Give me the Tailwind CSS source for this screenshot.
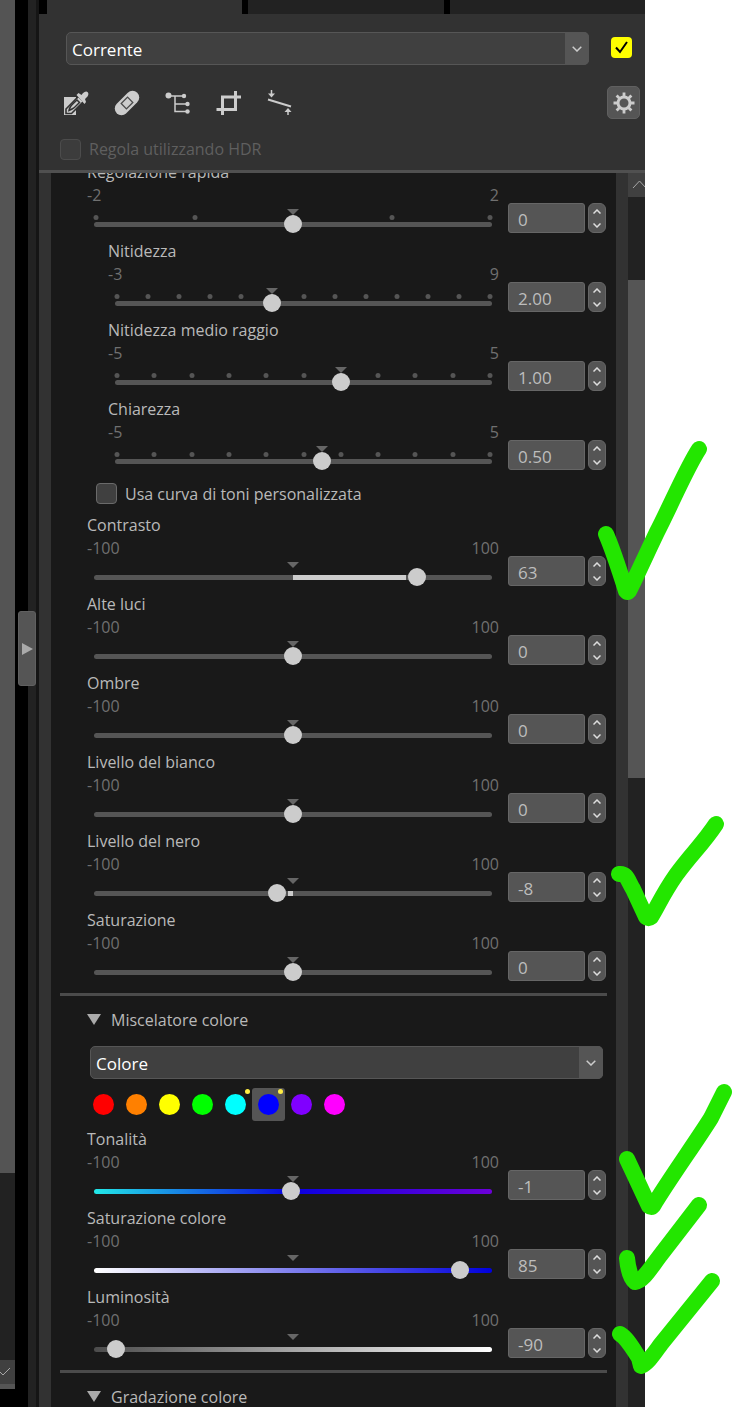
<!doctype html>
<html lang="it">
  <head>
    <meta charset="utf-8" />
    <meta name="viewport" content="width=device-width, initial-scale=1" />
    <title>Regolazioni</title>
    <script src="https://cdn.jsdelivr.net/npm/@tailwindcss/browser@4"></script>
  </head>

  <body class="relative flex h-screen overflow-hidden bg-white font-['Open_Sans','Noto_Sans',sans-serif] text-base text-[#b9b9b9]">
    <!-- Left window edge -->
    <div class="flex w-[15px] shrink-0 flex-col bg-black">
      <div class="h-[1173px] shrink-0 bg-[#545454]"></div>
      <div class="h-[187px] shrink-0 bg-[#222222]"></div>
      <button type="button" aria-label="Scorri in basso" class="h-[29px] shrink-0 border-b-[5px] border-[#555555] bg-[#404040]">
        <svg class="h-6 w-[15px]" viewBox="0 0 15 24" fill="none" stroke="#a8a8a8"><path d="M-3 9 3 15l7-7" /></svg>
      </button>
    </div>
    <div class="relative flex w-6 shrink-0 bg-black pl-[13px]">
      <div class="w-2 bg-[#222222]"></div>
      <div class="w-[3px] bg-[#151515]"></div>
      <button type="button" aria-label="Nascondi pannello" class="absolute top-[611px] left-[3px] flex h-[75px] w-[18px] items-center justify-center rounded-[3px] border border-[#606060] bg-[#555555]">
        <svg class="h-3 w-3 shrink-0" viewBox="0 0 12 12" fill="#aaaaaa"><path d="M1 0v12l11-6z" /></svg>
      </button>
    </div>

    <!-- Panel -->
    <main class="flex min-w-0 flex-1 flex-col bg-[#323232]">
      <nav class="flex h-[14px] shrink-0 gap-[6px] overflow-hidden bg-black pl-2">
        <a href="#regolazioni" class="-mt-[18px] flex-1 bg-[#323232] text-center leading-4 text-[#c8c8c8]">Regolazioni</a>
        <a href="#colore" class="-mt-[18px] flex-1 bg-[#222222]" aria-label="Colore"></a>
        <a href="#proprieta" class="-mt-[18px] flex-1 bg-[#222222] text-center leading-4 text-[#a0a0a0]">Proprietà</a>
      </nav>

      <header class="shrink-0 pt-[18px] pr-[5px] pb-[10px] pl-[21px]">
        <div class="flex items-center pl-[6px]">
          <div class="relative flex-1">
            <select aria-label="Versione" class="block h-[33px] w-full appearance-none rounded-[5px] border border-[#565656] bg-[#404040] pt-[2px] pl-[5px] text-[17px] text-white">
              <option>Corrente</option>
            </select>
            <span class="pointer-events-none absolute inset-y-0 right-0 flex w-6 items-center justify-center rounded-r-[5px] bg-[#555555]">
              <svg class="h-[6px] w-[10px]" viewBox="0 0 10 6" fill="none" stroke="#cccccc" stroke-width="1.5"><path d="m.7.7 4.3 4.3 4.3-4.3" /></svg>
            </span>
          </div>
          <div class="relative mr-2 mb-[2px] ml-[22px] size-[21px]">
            <input type="checkbox" checked aria-label="Attiva regolazioni" class="block size-[21px] appearance-none rounded-[4px] bg-[#ffff00]" />
            <svg class="pointer-events-none absolute inset-0" viewBox="0 0 21 21" fill="none" stroke="#000000" stroke-width="2"><path d="m5 10.5 4 4.500 7-10" /></svg>
          </div>
        </div>

        <div class="mt-[21px] flex items-center text-[#cccccc]">
          <div class="flex flex-1 gap-[25px] pl-[3px]">
            <button type="button" aria-label="Punto grigio" class="size-[26px]">
              <svg viewBox="0 0 26 26">
                <path d="M1 7h12v18H1z" fill="currentColor" />
                <path d="M3 23.500V19L15.500 6.500l5 5L8.500 23.500z" fill="currentColor" stroke="#323232" stroke-width="1.600" />
                <path d="M6 20.500c1-4 1.500-4.500 8-10.500l2.500 2.500c-6 6-6.500 6.500-10.500 8z" fill="none" stroke="#323232" stroke-width="1.500" />
                <path d="m13.500 5 2-2 3 2c1.500-2 3-3.500 5-3.500 2.200.5 2.500 3 1 5l-2.500 2.500 1 3-1.500 2z" fill="currentColor" />
              </svg>
            </button>
            <button type="button" aria-label="Ritocco" class="size-[26px]">
              <svg viewBox="0 0 26 26">
                <g transform="rotate(-45 13 13)">
                  <rect x="-1.500" y="6.300" width="29" height="13.400" rx="6.700" fill="currentColor" />
                  <rect x="8.500" y="9.300" width="9" height="7.400" fill="none" stroke="#4a4a4a" stroke-width="1.300" />
                </g>
              </svg>
            </button>
            <button type="button" aria-label="Punti di controllo" class="size-[26px]">
              <svg viewBox="0 0 26 26" fill="none" stroke="currentColor" stroke-width="1.500">
                <path d="M3 6h16M10 6v15.500h12M10 14h12" />
                <g fill="currentColor" stroke="none">
                  <circle cx="3.500" cy="5.500" r="3" /><circle cx="19" cy="6" r="2.200" /><circle cx="22.500" cy="14" r="2.200" /><circle cx="22.500" cy="21.500" r="2.200" />
                </g>
              </svg>
            </button>
            <button type="button" aria-label="Ritaglia" class="size-[26px]">
              <svg viewBox="0 0 26 26" fill="none" stroke="currentColor" stroke-width="3"><path d="M6.500 25V7H25M.500 19.500H19.500V1" /></svg>
            </button>
            <button type="button" aria-label="Raddrizza" class="size-[26px]">
              <svg viewBox="0 0 26 26" fill="none" stroke="currentColor">
                <path d="M1 9.500 24 16.500" stroke-width="2" />
                <path d="M4.500 0v5M21 25v-5" stroke-width="1.500" />
                <path d="M1 3.500h7L4.500 7.500zM17.500 22h7L21 18z" fill="currentColor" stroke="none" />
              </svg>
            </button>
          </div>
          <button type="button" aria-label="Impostazioni" class="flex size-[33px] items-center justify-center rounded-[5px] border border-[#606060] bg-[#555555]">
            <svg class="size-[22px]" viewBox="-11 -11 22 22" fill="none" stroke="currentColor">
              <circle r="6" stroke-width="3" />
              <path d="M0-10.500V-6M0 10.500V6M-10.500 0H-6M10.500 0H6M-7.400-7.400l3 3M7.400 7.400l-3-3M-7.400 7.400l3-3M7.400-7.400l-3 3" stroke-width="2.800" />
            </svg>
          </button>
        </div>

        <div class="mt-[19px] flex items-center gap-2">
          <input id="hdr" type="checkbox" disabled class="size-[21px] appearance-none rounded-[4px] border border-[#4c4c4c] bg-[#3c3c3c]" />
          <label for="hdr" class="leading-[22px] text-[#5f5f5f]">Regola utilizzando HDR</label>
        </div>
      </header>

      <div class="flex min-h-0 flex-1 border-t-[3px] border-[#505050]">
        <div class="mx-3 min-w-0 flex-1 overflow-hidden bg-[#191919]">
          <div class="-mt-[13px] pr-[10px] pl-9">
            <div id="quick"></div>
            <div class="flex h-[37px] items-center gap-2 pb-[2px] pl-[9px]">
              <input id="tone" type="checkbox" class="size-[21px] appearance-none rounded-[4px] border border-[#6a6a6a] bg-[#404040]" />
              <label for="tone">Usa curva di toni personalizzata</label>
            </div>
            <div id="light"></div>
          </div>

          <hr class="mt-[6px] mr-[9px] ml-[9px] border-t-[3px] border-[#4b4b4b]" />
          <section class="pr-[10px] pl-9">
            <h2 class="flex h-[50px] items-center gap-[10px] pb-[2px]">
              <svg class="mb-[2px] h-[11px] w-[14px]" viewBox="0 0 14 11" fill="#aaaaaa"><path d="M0 0h14L7 11z" /></svg>
              Miscelatore colore
            </h2>
            <div class="relative mr-[3px] ml-[3px]">
              <select aria-label="Modalità miscelatore" class="block h-[33px] w-full appearance-none rounded-[5px] border border-[#565656] bg-[#404040] pt-[2px] pl-[5px] text-[17px] text-white">
                <option>Colore</option>
              </select>
              <span class="pointer-events-none absolute inset-y-0 right-0 flex w-6 items-center justify-center rounded-r-[5px] bg-[#555555]">
                <svg class="h-[6px] w-[10px]" viewBox="0 0 10 6" fill="none" stroke="#cccccc" stroke-width="1.5"><path d="m.7.7 4.3 4.3 4.3-4.3" /></svg>
              </span>
            </div>
            <div id="swatches" class="mt-[9px] mb-[6px] flex"></div>
            <div id="mixer"></div>
          </section>

          <hr class="mt-[6px] mr-[9px] ml-[9px] border-t-[3px] border-[#4b4b4b]" />
          <h2 class="flex h-[50px] items-center gap-[10px] pb-[2px] pl-9">
            <svg class="mb-[2px] h-[11px] w-[14px]" viewBox="0 0 14 11" fill="#aaaaaa"><path d="M0 0h14L7 11z" /></svg>
            Gradazione colore
          </h2>
        </div>

        <!-- Scrollbar -->
        <div class="w-[17px] shrink-0 overflow-hidden bg-[#222222]">
          <button type="button" aria-label="Scorri in alto" class="mb-[83px] block h-6 w-full bg-[#404040]">
            <svg class="h-6 w-[17px]" viewBox="0 0 17 24" fill="none" stroke="#a8a8a8"><path d="m5 15 6.500-7 6.500 7" /></svg>
          </button>
          <div class="h-[498px] bg-[#555555]"></div>
        </div>
      </div>
    </main>
    <div class="w-[88px] shrink-0"></div>

    <!-- Hand-drawn ticks -->
    <svg class="pointer-events-none absolute top-0 right-0 h-[1407px] w-[140px]" viewBox="593 0 140 1407" fill="none" stroke="#23e600" stroke-width="16" stroke-linecap="round" stroke-linejoin="round">
      <path d="M606 534c4 9 14 38 20 57q1.500 2 3 0c8-16 17-36 28-59 14-27 29-63 42-83" />
      <path d="M619 874c8-1 9 7 14 15l13 28q2.500 2 5 0c6-9 11-22 25-42 16-22 26-30 40-51" />
      <path d="M627 1159l22 47q2.500 2 4 0c17-28 43-64 58-88l13-26" />
      <path d="M627 1258c1 11 4 21 8 24 8-1 15-13 24-25l40-52" />
      <path d="M620 1334c7 4 13 15 19 24l2 8c7-3 12-11 20-22l51-63" />
    </svg>

    <script>
      const PLAIN = 'bg-[#555555]';

      const quick = [
        { id: 'rapida', label: 'Regolazione rapida', min: -2, max: 2, value: 0, mark: 0, dots: 5 },
        { id: 'nitidezza', label: 'Nitidezza', min: -3, max: 9, value: 2, text: '2.00', mark: 2, dots: 13, indent: true },
        { id: 'medio', label: 'Nitidezza medio raggio', min: -5, max: 5, value: 1, text: '1.00', mark: 1, dots: 11, indent: true },
        { id: 'chiarezza', label: 'Chiarezza', min: -5, max: 5, value: 0.5, text: '0.50', mark: 0.5, dots: 11, indent: true },
      ];
      const light = [
        { id: 'contrasto', label: 'Contrasto', value: 63, fill: true },
        { id: 'luci', label: 'Alte luci', value: 0 },
        { id: 'ombre', label: 'Ombre', value: 0 },
        { id: 'bianco', label: 'Livello del bianco', value: 0 },
        { id: 'nero', label: 'Livello del nero', value: -8, fill: true },
        { id: 'saturazione', label: 'Saturazione', value: 0 },
      ];
      const mixer = [
        { id: 'tonalita', label: 'Tonalità', value: -1, track: 'bg-linear-to-r/srgb from-[#22e8e8] via-[#0a00e0] to-[#6c00d8]' },
        { id: 'satcolore', label: 'Saturazione colore', value: 85, track: 'bg-linear-to-r/srgb from-white to-[#0000dd]' },
        { id: 'luminosita', label: 'Luminosità', value: -90, track: 'bg-linear-to-r/srgb from-[#4c4c4c] to-white' },
      ];

      function row({ id, label, min = -100, max = 100, value, text = value, mark = 0, dots = 0, indent, fill, track = PLAIN }) {
        const pct = (v) => ((v - min) / (max - min)) * 100;
        let ticks = '';
        for (let i = 0; i < dots; i++) {
          ticks += `<i class="absolute top-[9px] size-[5px] -translate-x-1/2 rounded-full bg-[#555555]" style="left:${(i / (dots - 1)) * 100}%"></i>`;
        }
        // the bar stops 11px short of the knob's centre
        const [a, b] = [pct(value), pct(mark)];
        const bar = fill
          ? `<i class="absolute top-4 h-[5px] bg-[#cccccc]" style="left:calc(${Math.min(a, b)}% + ${a < b ? 11 : 0}px);width:calc(${Math.abs(a - b)}% - 11px)"></i>`
          : '';
        return `
          <div class="flex h-[79px] items-end pb-[6px] ${indent ? 'pl-[21px]' : ''}">
            <div class="min-w-0 flex-1">
              <label for="${id}" class="block h-6 leading-6">${label}</label>
              <div class="flex h-[22px] justify-between leading-[22px] text-[#707070]"><span>${min}</span><span>${max}</span></div>
              <div class="relative h-[27px]">
                <div class="absolute inset-x-[7px] top-4 h-[5px] rounded-full ${track}"></div>
                <div class="absolute inset-x-[9px] inset-y-0">
                  ${ticks}${bar}
                  <svg class="absolute top-[3px] h-[6px] w-3 -translate-x-1/2" viewBox="0 0 12 6" fill="#666666" style="left:${pct(mark)}%"><path d="M0 0h12L6 6z" /></svg>
                </div>
                <input id="${id}" type="range" min="${min}" max="${max}" step="any" value="${value}"
                  class="absolute inset-x-0 bottom-0 m-0 block h-[18px] w-full appearance-none bg-transparent [&::-webkit-slider-thumb]:size-[18px] [&::-webkit-slider-thumb]:appearance-none [&::-webkit-slider-thumb]:rounded-full [&::-webkit-slider-thumb]:bg-[#cccccc]" />
              </div>
            </div>
            <input type="text" value="${text}" aria-label="${label}, valore" class="ml-[9px] h-[30px] w-[77px] rounded-[3px] border border-[#666666] bg-[#555555] pt-[2px] pl-[9px] text-[17px] text-[#bdbdbd]" />
            <div class="ml-[3px] flex h-[30px] w-[18px] flex-col rounded-[6px] border border-[#666666] bg-[#555555]">
              <button type="button" aria-label="Aumenta" class="flex flex-1 items-center justify-center">
                <svg class="h-[5px] w-2" viewBox="0 0 8 5" fill="none" stroke="#dddddd" stroke-width="1.5"><path d="M.5 4.500 4 1l3.500 3.500" /></svg>
              </button>
              <button type="button" aria-label="Diminuisci" class="flex flex-1 items-center justify-center">
                <svg class="h-[5px] w-2" viewBox="0 0 8 5" fill="none" stroke="#dddddd" stroke-width="1.5"><path d="M.5.5 4 4 7.500.500" /></svg>
              </button>
            </div>
          </div>`;
      }

      document.getElementById('quick').innerHTML = quick.map(row).join('');
      document.getElementById('light').innerHTML = light.map(row).join('');
      document.getElementById('mixer').innerHTML = mixer.map(row).join('');

      const swatches = [
        { name: 'Rosso', color: 'bg-[#ff0000]' },
        { name: 'Arancione', color: 'bg-[#ff8000]' },
        { name: 'Giallo', color: 'bg-[#ffff00]' },
        { name: 'Verde', color: 'bg-[#00ff00]' },
        { name: 'Ciano', color: 'bg-[#00ffff]', edited: true },
        { name: 'Blu', color: 'bg-[#0000ff]', edited: true, active: true },
        { name: 'Viola', color: 'bg-[#8000ff]' },
        { name: 'Magenta', color: 'bg-[#ff00ff]' },
      ];
      document.getElementById('swatches').innerHTML = swatches
        .map(
          (s) => `
          <button type="button" aria-label="${s.name}" class="relative flex size-[33px] items-center justify-center rounded-[3px] ${s.active ? 'bg-[#555555]' : ''}">
            <span class="size-[21px] rounded-full ${s.color}"></span>
            ${s.edited ? '<i class="absolute top-[1px] right-[2px] size-[5px] rounded-full bg-[#ffee44]"></i>' : ''}
          </button>`
        )
        .join('');
    </script>
  </body>
</html>
